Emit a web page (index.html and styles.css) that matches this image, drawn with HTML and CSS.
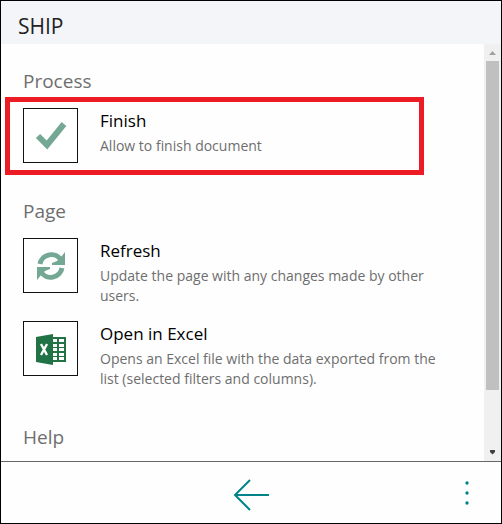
FILE: index.html
```html
<!DOCTYPE html>
<html lang="en">
<head>
    <meta charset="UTF-8">
    <meta name="viewport" content="width=device-width, initial-scale=1.0">
    <title>SHIP</title>
    <link rel="stylesheet" href="styles.css">
</head>
<body>
    <div class="panel">
        <header class="panel-header">
            <h1>SHIP</h1>
        </header>

        <div class="panel-body">
            <main class="actions">
                <section>
                    <h2>Process</h2>
                    <button type="button" class="action highlighted">
                        <span class="action-icon">
                            <svg width="32" height="32" viewBox="0 0 32 32" aria-hidden="true">
                                <path d="M3 16 12 25 29 4" fill="none" stroke="#75a795" stroke-width="6"/>
                            </svg>
                        </span>
                        <span class="action-text">
                            <span class="action-title">Finish</span>
                            <span class="action-description">Allow to finish document</span>
                        </span>
                    </button>
                </section>

                <section>
                    <h2>Page</h2>
                    <button type="button" class="action">
                        <span class="action-icon">
                            <svg width="32" height="32" viewBox="0 0 32 32" aria-hidden="true">
                                <g fill="none" stroke="#75a795" stroke-width="5">
                                    <path d="M5 14A11.500 11.500 0 0 1 26 10"/>
                                    <path d="M27 18A11.500 11.500 0 0 1 6 22"/>
                                </g>
                                <path d="M30 2V15H17V13L22 11 26 7Z" fill="#75a795"/>
                                <path d="M2 30V17H15V19L10 21 6 25Z" fill="#75a795"/>
                            </svg>
                        </span>
                        <span class="action-text">
                            <span class="action-title">Refresh</span>
                            <span class="action-description">Update the page with any changes made by other users.</span>
                        </span>
                    </button>
                    <button type="button" class="action">
                        <span class="action-icon">
                            <svg width="32" height="32" viewBox="0 0 32 32" aria-hidden="true">
                                <path d="M18 4H31V29H18Z" fill="#217346"/>
                                <path d="M18 6h4v3h-4zM18 11h4v3h-4zM18 15h4v3h-4zM18 20h4v3h-4zM18 24h4v3h-4zM24 6h5v3h-5zM24 11h5v3h-5zM24 15h5v3h-5zM24 20h5v3h-5zM24 24h5v3h-5z" fill="#fff"/>
                                <path d="M1 4 18 1V32L1 29Z" fill="#217346"/>
                                <path d="M6 11 12 22M12 11 6 22" fill="none" stroke="#fff" stroke-width="2.400"/>
                            </svg>
                        </span>
                        <span class="action-text">
                            <span class="action-title">Open in Excel</span>
                            <span class="action-description">Opens an Excel file with the data exported from the list (selected filters and columns).</span>
                        </span>
                    </button>
                </section>

                <section>
                    <h2>Help</h2>
                </section>
            </main>

            <div class="scrollbar" aria-hidden="true">
                <svg width="17" height="17" viewBox="0 0 17 17">
                    <path d="M5 11h7L8.500 7Z" fill="#a0a0a0"/>
                </svg>
                <div class="scrollbar-track">
                    <div class="scrollbar-thumb"></div>
                </div>
                <svg width="17" height="17" viewBox="0 0 17 17">
                    <path d="M6 6h5v2L8.500 10.500 6 8Z" fill="#404040"/>
                </svg>
            </div>
        </div>

        <footer class="panel-footer">
            <button type="button" class="back-button" aria-label="Back">
                <svg width="38" height="34" viewBox="0 0 38 34" fill="none" stroke="#008489" stroke-width="2" aria-hidden="true">
                    <path d="M3 17H37M18 2 3 17 18 32"/>
                </svg>
            </button>
            <button type="button" class="more-button" aria-label="More options">
                <svg width="6" height="26" viewBox="0 0 6 26" fill="#008489" aria-hidden="true">
                    <circle cx="3" cy="3" r="1.700"/>
                    <circle cx="3" cy="13" r="1.700"/>
                    <circle cx="3" cy="23" r="1.700"/>
                </svg>
            </button>
        </footer>
    </div>
</body>
</html>
```
FILE: styles.css
```css
* {
    box-sizing: border-box;
}

body {
    font-family: "Segoe UI", "Open Sans", "Noto Sans", sans-serif;
    margin: 0;
    background-color: #fefefe;
}

h1, h2 {
    margin: 0;
    font-weight: 400;
}

button {
    font-family: inherit;
    padding: 0;
    border: none;
    background: none;
    cursor: pointer;
}

.panel {
    display: flex;
    flex-direction: column;
    height: 100vh;
    border: 1px solid #000;
}

.panel-header {
    padding: 10px 17px 3px;
    background-color: #f4f5f8;
}

.panel-header h1 {
    font-size: 21px;
    line-height: 30px;
    color: #222;
}

.panel-body {
    display: flex;
    flex: 1;
    min-height: 0;
}

.actions {
    flex: 1;
    min-width: 0;
    padding: 4px 40px 0 22px;
    overflow: hidden;
}

.actions h2 {
    padding: 18px 0 12px;
    font-size: 19px;
    line-height: 30px;
    color: #6e6e6e;
}

.action {
    display: flex;
    align-items: flex-start;
    gap: 22px;
    position: relative;
    width: 100%;
    margin-bottom: 15px;
    text-align: left;
}

.action-icon {
    display: flex;
    flex: none;
    align-items: center;
    justify-content: center;
    width: 55px;
    height: 55px;
    border: 1px solid #111;
    background-color: #fff;
}

.action-title {
    display: block;
    margin-bottom: 2px;
    font-size: 17px;
    line-height: 26px;
    color: #000;
}

.action-description {
    display: block;
    font-size: 14px;
    line-height: 20px;
    color: #6e6e6e;
}

.highlighted::after {
    content: "";
    position: absolute;
    inset: -11px 20px -12px -18px;
    border: 5px solid #ed1c24;
}

.scrollbar {
    display: flex;
    flex-direction: column;
    width: 17px;
    background-color: #f0f0f0;
}

.scrollbar svg {
    display: block;
}

.scrollbar-track {
    flex: 1;
    padding: 0 2px;
}

.scrollbar-thumb {
    height: 86%;
    background-color: #c0c0c0;
}

.panel-footer {
    display: grid;
    grid-template-columns: 1fr auto 1fr;
    align-items: center;
    height: 62px;
    padding: 0 31px;
    border-top: 1px solid #666;
}

.back-button {
    grid-column: 2;
    padding-top: 4px;
}

.more-button {
    justify-self: end;
}

.panel-footer svg {
    display: block;
}
```
